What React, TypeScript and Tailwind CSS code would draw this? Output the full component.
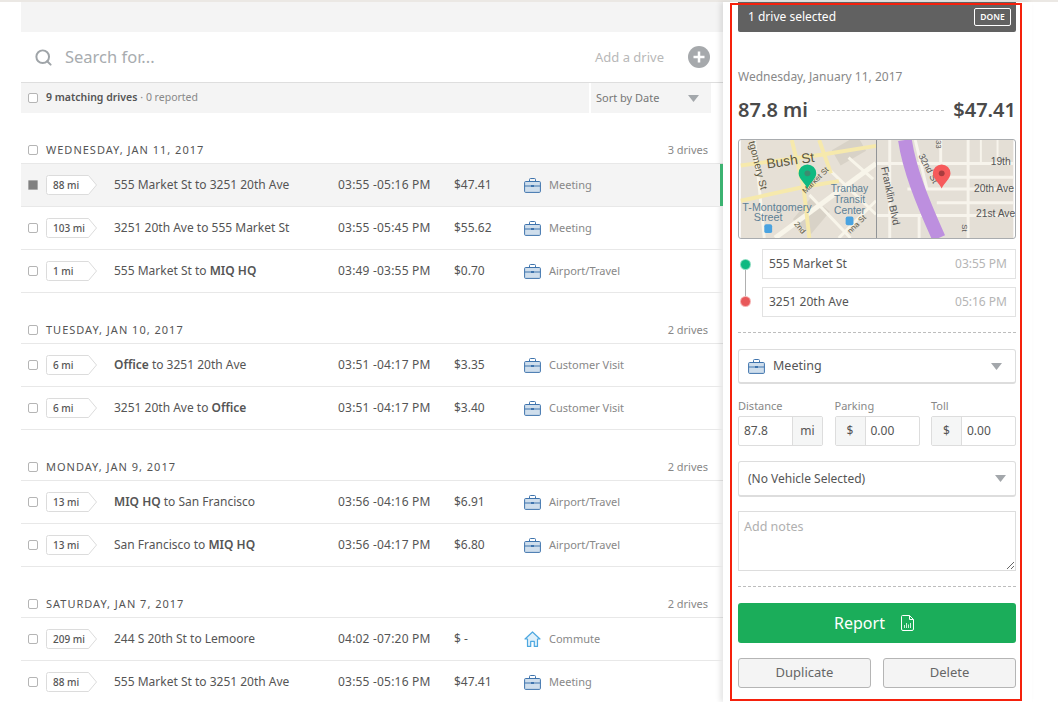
import { Search } from 'lucide-react';
import type { ReactNode } from 'react';

type Drive = {
  miles: string;
  route: ReactNode;
  time: string;
  amount: string;
  kind: string;
  active?: boolean;
};

type Group = { date: string; count: string; drives: Drive[] };

const groups: Group[] = [
  {
    date: 'WEDNESDAY, JAN 11, 2017',
    count: '3 drives',
    drives: [
      { miles: '88 mi', route: '555 Market St to 3251 20th Ave', time: '03:55 -05:16 PM', amount: '$47.41', kind: 'Meeting', active: true },
      { miles: '103 mi', route: '3251 20th Ave to 555 Market St', time: '03:55 -05:45 PM', amount: '$55.62', kind: 'Meeting' },
      { miles: '1 mi', route: <>555 Market St to <b className="font-semibold">MIQ HQ</b></>, time: '03:49 -03:55 PM', amount: '$0.70', kind: 'Airport/Travel' },
    ],
  },
  {
    date: 'TUESDAY, JAN 10, 2017',
    count: '2 drives',
    drives: [
      { miles: '6 mi', route: <><b className="font-semibold">Office</b> to 3251 20th Ave</>, time: '03:51 -04:17 PM', amount: '$3.35', kind: 'Customer Visit' },
      { miles: '6 mi', route: <>3251 20th Ave to <b className="font-semibold">Office</b></>, time: '03:51 -04:17 PM', amount: '$3.40', kind: 'Customer Visit' },
    ],
  },
  {
    date: 'MONDAY, JAN 9, 2017',
    count: '2 drives',
    drives: [
      { miles: '13 mi', route: <><b className="font-semibold">MIQ HQ</b> to San Francisco</>, time: '03:56 -04:16 PM', amount: '$6.91', kind: 'Airport/Travel' },
      { miles: '13 mi', route: <>San Francisco to <b className="font-semibold">MIQ HQ</b></>, time: '03:56 -04:17 PM', amount: '$6.80', kind: 'Airport/Travel' },
    ],
  },
  {
    date: 'SATURDAY, JAN 7, 2017',
    count: '2 drives',
    drives: [
      { miles: '209 mi', route: '244 S 20th St to Lemoore', time: '04:02 -07:20 PM', amount: '$ -', kind: 'Commute' },
      { miles: '88 mi', route: '555 Market St to 3251 20th Ave', time: '03:55 -05:16 PM', amount: '$47.41', kind: 'Meeting' },
    ],
  },
];

function Briefcase() {
  return (
    <svg width="17" height="15" viewBox="0 0 17 15" fill="none" className="shrink-0">
      <path d="M5.5 3.5V1.5a1 1 0 0 1 1-1h4a1 1 0 0 1 1 1v2" stroke="#3f74ad" />
      <rect x="0.6" y="3.5" width="15.8" height="10.9" rx="1" fill="#cfdeec" stroke="#3f74ad" />
      <path d="M0.6 8h15.8" stroke="#3f74ad" />
      <path d="M7 8h3" stroke="#3f74ad" strokeWidth="2" />
    </svg>
  );
}

function House() {
  return (
    <svg width="17" height="16" viewBox="0 0 17 16" fill="none" className="shrink-0">
      <path d="M8.5 1 1 8h2.5v7.4h3.2v-5h3.6v5h3.2V8H16z" fill="#dff0fb" stroke="#4ea8e0" strokeWidth="1.2" strokeLinejoin="round" />
    </svg>
  );
}

function Caret({ color = '#a3a7ab' }: { color?: string }) {
  return (
    <svg width="11" height="7" viewBox="0 0 11 7" className="shrink-0">
      <path d="M0 0h11L5.5 7z" fill={color} />
    </svg>
  );
}

function Check({ filled }: { filled?: boolean }) {
  if (filled) return <div className="w-[10px] h-[10px] shrink-0 bg-[#808080] border border-[#aaa] rounded-[1px]" />;
  return <div className="w-[10px] h-[10px] shrink-0 bg-white border border-[#b5b5b5] rounded-[2px]" />;
}

function MilesBadge({ miles }: { miles: string }) {
  return (
    <div className="relative w-[52px] h-[20px] shrink-0 flex items-center pl-[7px] text-[10px] font-medium text-[#555]">
      <svg width="52" height="20" viewBox="0 0 52 20" className="absolute left-0 top-0">
        <path d="M2.5 .5H42.5L50.5 10 42.5 19.5H2.5a2 2 0 0 1-2-2V2.5a2 2 0 0 1 2-2z" fill="#fff" stroke="#dcdcdc" />
      </svg>
      <span className="relative">{miles}</span>
    </div>
  );
}

function DriveRow({ drive }: { drive: Drive }) {
  return (
    <div className={`relative flex items-center h-[43px] pl-[7px] border-b border-[#e8e8e8] ${drive.active ? 'bg-[#f4f4f4]' : ''}`}>
      <Check filled={drive.active} />
      <div className="ml-[8px]"><MilesBadge miles={drive.miles} /></div>
      <div className="ml-[16px] w-[224px] text-[12px] text-[#555] whitespace-nowrap">{drive.route}</div>
      <div className="w-[116px] text-[12px] tracking-[0.2px] text-[#555] whitespace-nowrap">{drive.time}</div>
      <div className="w-[70px] text-[12px] text-[#555]">{drive.amount}</div>
      {drive.kind === 'Commute' ? <House /> : <Briefcase />}
      <div className="ml-[8px] text-[11px] text-[#888]">{drive.kind}</div>
      {drive.active && <div className="absolute right-0 top-0 bottom-0 w-[3px] bg-[#3cb371]" />}
    </div>
  );
}

function DriveGroup({ group }: { group: Group }) {
  return (
    <div className="mb-[30px]">
      <div className="flex items-center h-[14px] pl-[7px] pr-[15px] mb-[6px] text-[11px]">
        <Check />
        <div className="ml-[8px] tracking-[1px] text-[#555]">{group.date}</div>
        <div className="ml-auto text-[#888]">{group.count}</div>
      </div>
      <div className="border-t border-[#e8e8e8]">
        {group.drives.map((d, i) => <DriveRow key={i} drive={d} />)}
      </div>
    </div>
  );
}

function Pin({ x, color, dot }: { x: number; color: string; dot: string }) {
  return (
    <g transform={`translate(${x} 34)`}>
      <path d="M0 15.5C-2.5 10-9 5.5-9 0A9 9 0 0 1 9 0C9 5.5 2.5 10 0 15.5z" fill={color} />
      <circle r="3" fill={dot} />
    </g>
  );
}

function MapPreview() {
  return (
    <svg width="278" height="100" viewBox="0 0 278 100" className="block rounded-[3px] border border-[#a9acaf] font-['Liberation_Sans',sans-serif]">
      <rect width="278" height="100" fill="#e6e0d6" />
      {/* left tile */}
      <rect x="96" y="2" width="30" height="18" fill="#d8d2c7" transform="rotate(-30 110 12)" />
      <rect x="60" y="62" width="24" height="30" fill="#d8d2c7" transform="rotate(40 72 77)" />
      <g fill="none">
        <path d="M138 24 35 100" stroke="#f8f5ea" strokeWidth="5" />
        <path d="M14 0 24 100M100 100 138 62M70 56 112 100M90 30 138 76M110 18 135 40" stroke="#f8f5ea" strokeWidth="3" />
        <path d="M0 26 82 15 138 6M0 62 64 48 100 42M52 0 64 48 70 100M80 0 92 34" stroke="#f6e9ac" strokeWidth="4" />
      </g>
      <g fill="#5a5540">
        <text x="27" y="29" fontSize="14" transform="rotate(-8 27 29)">Bush St</text>
        <text x="66" y="55" fontSize="8" transform="rotate(-45 66 55)">Market St</text>
        <text x="8" y="2" fontSize="10.5" transform="rotate(76 8 2)">tgomery St</text>
        <text x="54" y="86" fontSize="8" transform="rotate(50 54 86)">2nd</text>
        <text x="112" y="96" fontSize="8" transform="rotate(-45 112 96)">nna St</text>
      </g>
      <g fill="#5d7f95" fontSize="10.5" textAnchor="middle">
        <text x="111" y="53">Tranbay</text>
        <text x="111" y="64">Transit</text>
        <text x="111" y="75">Center</text>
        <text x="37" y="72" fontSize="11">T-Montgomery</text>
        <text x="28" y="83" fontSize="11">Street</text>
      </g>
      <rect x="24" y="86" width="8" height="9" rx="2" fill="#4aa3e0" />
      <rect x="107" y="78" width="8" height="9" rx="2" fill="#4aa3e0" />
      {/* right tile */}
      <rect x="138" width="140" height="100" fill="#e4dfd6" />
      <g fill="none" stroke="#f7f4ec">
        <path d="M139 24H278M139 77H278" strokeWidth="3" />
        <path d="M170 50H278M200 64H278M206 38H278" strokeWidth="3" />
        <path d="M152 0V100M204 0V40M232 0V100M178 0 190 50M182 78V100" strokeWidth="3" />
        <path d="M245 0V24M262 0V24" strokeWidth="2" />
      </g>
      <path d="M167.5 0C172 30 185 62 202 100" fill="none" stroke="#bd8fdf" strokeWidth="14" />
      <g fill="#555">
        <text x="143" y="28" fontSize="10.5" transform="rotate(78 143 28)">Franklin Blvd</text>
        <text x="181" y="16" fontSize="9.5" transform="rotate(62 181 16)">32nd St</text>
        <text x="255" y="26" fontSize="10.5">19th</text>
        <text x="238" y="53" fontSize="10.5">20th Ave</text>
        <text x="240" y="79" fontSize="10.5">21st Ave</text>
        <text x="199" y="0" fontSize="8" transform="rotate(90 199 0)">33</text>
        <text x="226" y="86" fontSize="8" transform="rotate(90 226 86)">St</text>
      </g>
      <rect x="138" width="1" height="100" fill="#8f9295" />
      <Pin x={68} color="#0fb981" dot="#3d8b70" />
      <Pin x={205} color="#f65a5b" dot="#a83c3e" />
    </svg>
  );
}

function RouteStop({ place, time }: { place: string; time: string }) {
  return (
    <div className="flex items-center justify-between h-[30px] pl-[6px] pr-[8px] border border-[#e2e2e2] text-[12px]">
      <span className="text-[#555] -mt-[1px]">{place}</span>
      <span className="text-[#b5b5b5] text-[12px]">{time}</span>
    </div>
  );
}

function Money({ label, value, unit, lead }: { label: string; value: string; unit: string; lead?: boolean }) {
  return (
    <div className="w-[85px]">
      <div className="text-[11px] leading-[14px] text-[#888] mb-[3px]">{label}</div>
      <div className="flex h-[30px] border border-[#ddd] rounded-[2px] text-[12px] text-[#555]">
        {lead ? (
          <>
            <div className="w-[30px] bg-[#f5f6f6] border-r border-[#ddd] flex items-center justify-center">{unit}</div>
            <div className="flex-1 flex items-center pl-[5px]">{value}</div>
          </>
        ) : (
          <>
            <div className="flex-1 flex items-center pl-[5px]">{value}</div>
            <div className="w-[30px] bg-[#f5f6f6] border-l border-[#ddd] flex items-center justify-center">{unit}</div>
          </>
        )}
      </div>
    </div>
  );
}

function Dashes() {
  return <div className="border-t border-dashed border-[#bdbdbd]" />;
}

function ReportIcon() {
  return (
    <svg width="13" height="16" viewBox="0 0 13 16" fill="none" stroke="#fff">
      <path d="M1.5.5H8.5L12.5 4.5V14a1.5 1.5 0 0 1-1.5 1.5H2A1.5 1.5 0 0 1 .5 14V1.5A1 1 0 0 1 1.5.5z" />
      <path d="M8.5.5V4.5H12.5" />
      <path d="M3.5 13V10M5.5 13V8M7.5 13V9.5M9.5 13V8" strokeWidth="1" opacity="0.8" />
    </svg>
  );
}

export default function App() {
  return (
    <div className="relative w-[1058px] h-[702px] overflow-hidden bg-white font-['Noto_Sans',sans-serif]">
      <div className="h-[2px] bg-[#ebe8e4]" />
      <div className="flex">
        {/* Drive list */}
        <div className="w-[723px] pl-[21px] shrink-0">
          <div className="h-[30px] bg-[#f4f4f4]" />
          <div className="flex items-center h-[51px] pl-[13px] pr-[13px] border-b border-[#dedede]">
            <Search className="w-[19px] h-[19px] text-[#9fa4a8]" strokeWidth={2.5} />
            <div className="ml-[12px] text-[16.5px] text-[#a8acaf]">Search for...</div>
            <div className="ml-auto mt-[2px] text-[13px] text-[#b8b8b8]">Add a drive</div>
            <svg width="22" height="22" viewBox="0 0 22 22" className="ml-[24px] shrink-0">
              <circle cx="11" cy="11" r="11" fill="#a6a9ac" />
              <path d="M11 5.5v11M5.5 11h11" stroke="#fff" strokeWidth="2.5" />
            </svg>
          </div>
          <div className="flex h-[30px] pr-[12px]">
            <div className="flex-1 flex items-center pl-[7px] bg-[#f4f4f4] text-[10.5px]">
              <Check />
              <span className="ml-[8px] font-semibold text-[#555]">9 matching drives</span>
              <span className="ml-[3px] text-[#888]">· 0 reported</span>
            </div>
            <div className="ml-[2px] w-[120px] flex items-center justify-between pl-[5px] pr-[12px] bg-[#f4f4f4] text-[11px] text-[#777]">
              Sort by Date
              <Caret />
            </div>
          </div>
          <div className="mt-[30px]">
            {groups.map((g, i) => <DriveGroup key={i} group={g} />)}
          </div>
        </div>

        {/* Selected drive panel */}
        <div className="w-[309px] h-[700px] shrink-0 pl-[15px] pr-[16px] bg-white shadow-[-3px_0_5px_rgba(0,0,0,0.1)]">
          <div className="flex items-center justify-between h-[30px] pl-[10px] pr-[5px] bg-[#616161] rounded-b-[2px] text-white">
            <span className="text-[12px]">1 drive selected</span>
            <span className="flex items-center justify-center w-[37px] h-[18px] border border-white rounded-[2px] text-[8.5px] font-semibold">DONE</span>
          </div>
          <div className="mt-[37px] text-[12px] leading-[16px] text-[#888]">Wednesday, January 11, 2017</div>
          <div className="mt-[12px] flex items-center h-[26px] text-[#4a4a4a]">
            <span className="text-[20px] font-semibold">87.8 mi</span>
            <div className="flex-1 mx-[9px] border-t border-dashed border-[#bdbdbd]" />
            <span className="text-[20px] font-semibold">$47.41</span>
          </div>
          <div className="mt-[16px]"><MapPreview /></div>
          <div className="mt-[10px] flex">
            <div className="relative w-[24px] shrink-0">
              <div className="absolute left-[7px] top-[11px] w-[1px] h-[38px] bg-[#b0b0b0]" />
              <div className="absolute left-[3px] top-[11px] w-[9px] h-[9px] rounded-full bg-[#0fb981] ring-1 ring-[#8adcc0]" />
              <div className="absolute left-[3px] top-[48px] w-[9px] h-[9px] rounded-full bg-[#e8585a] ring-1 ring-[#f5b0b0]" />
            </div>
            <div className="flex-1 flex flex-col gap-[8px]">
              <RouteStop place="555 Market St" time="03:55 PM" />
              <RouteStop place="3251 20th Ave" time="05:16 PM" />
            </div>
          </div>
          <div className="mt-[15px]"><Dashes /></div>
          <div className="mt-[16px] flex items-center h-[35px] pl-[9px] pr-[13px] border border-[#ddd] border-b-2 rounded-[3px] text-[12.5px] text-[#555]">
            <Briefcase />
            <span className="ml-[8px]">Meeting</span>
            <span className="ml-auto"><Caret /></span>
          </div>
          <div className="mt-[15px] flex justify-between">
            <Money label="Distance" value="87.8" unit="mi" />
            <Money label="Parking" value="0.00" unit="$" lead />
            <Money label="Toll" value="0.00" unit="$" lead />
          </div>
          <div className="mt-[15px] flex items-center justify-between h-[36px] pl-[9px] pr-[9px] border border-[#ddd] border-b-2 rounded-[3px] text-[12px] text-[#555]">
            (No Vehicle Selected)
            <Caret />
          </div>
          <textarea
            className="mt-[14px] block w-full h-[60px] px-[5px] py-[6px] border border-[#ddd] text-[12.5px] placeholder:text-[#b0b0b0] outline-none"
            placeholder="Add notes"
          />
          <div className="mt-[15px]"><Dashes /></div>
          <div className="mt-[16px] flex items-center justify-center gap-[16px] h-[40px] pr-[6px] bg-[#1bad5a] rounded-[3px] text-white text-[16px]">
            Report
            <ReportIcon />
          </div>
          <div className="mt-[15px] flex justify-between">
            <div className="w-[133px] h-[30px] flex items-center justify-center bg-[#f4f4f4] border border-[#b5b5b5] rounded-[3px] text-[13px] text-[#666]">Duplicate</div>
            <div className="w-[133px] h-[30px] flex items-center justify-center bg-[#f4f4f4] border border-[#b5b5b5] rounded-[3px] text-[13px] text-[#666]">Delete</div>
          </div>
        </div>
      </div>

      {/* annotation frame over the panel */}
      <div className="absolute left-[730px] top-[3px] w-[292px] h-[698px] border-2 border-[#f5210c] pointer-events-none" />
    </div>
  );
}
